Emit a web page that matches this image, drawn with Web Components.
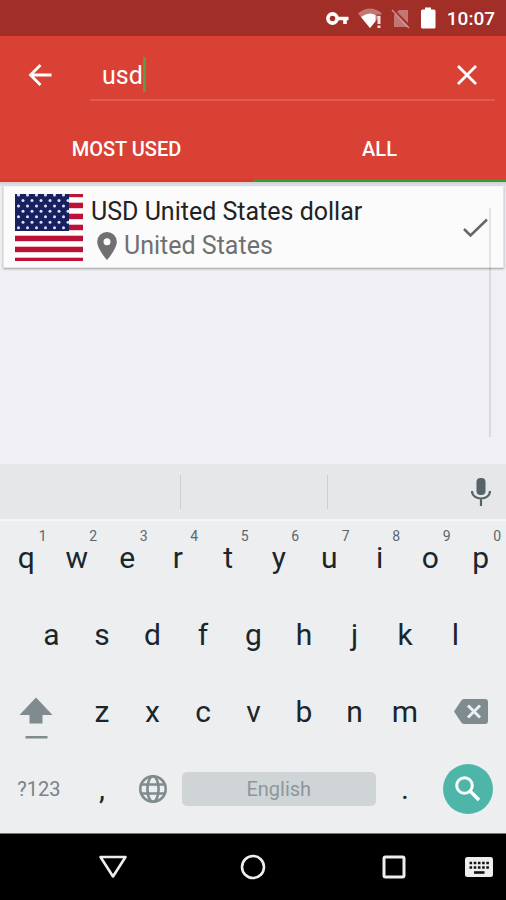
<!DOCTYPE html>
<html lang="en">
<head>
<meta charset="utf-8">
<meta name="viewport" content="width=device-width, initial-scale=1">
<title>Currency search</title>
<style>
html, body { height: 100%; margin: 0; }
body { font-family: Roboto, "Noto Sans", sans-serif; background: #efeff4; }
</style>
</head>
<body>
<currency-app></currency-app>
<script>
const reset = `
  *, *::before { box-sizing: border-box; }
  button, input { font: inherit; color: inherit; border: 0; padding: 0; margin: 0; background: none; outline: 0; }
  svg { display: block; flex: none; }
`;
function define(name, css, html) {
  const t = document.createElement('template');
  customElements.define(name, class extends HTMLElement {
    constructor() {
      super();
      t.innerHTML = `<style>${reset}${css}</style>${typeof html === 'function' ? html(this) : html}`;
      this.attachShadow({ mode: 'open' }).append(t.content.cloneNode(true));
    }
  });
}

define('status-bar', `
  :host { display: flex; align-items: center; justify-content: flex-end; height: 36px; padding: 2px 11px 0 12px; background: #a22e28; color: #fff; font-size: 19px; font-weight: 500; line-height: 24px; }
  .gap { margin-left: 8px; }
  time { margin-left: 8px; }
`, `
  <svg width="24" height="24" viewBox="0 0 24 24"><path fill="none" stroke="#fff" stroke-width="3.600" d="M12 11.500H23.500M20 12v5"/><circle cx="7.500" cy="11.500" r="4.600" fill="none" stroke="#fff" stroke-width="3.600"/></svg>
  <svg class="gap" width="26" height="24" viewBox="0 0 26 24"><path d="M1 6.500Q13-3.500 25 6.500L13 21z" fill="#fff" opacity=".35"/><path d="M4 10Q13 3 22 10L13 21z" fill="#fff"/><path d="M18.500 7.500H26V22h-7.500z" fill="#a22e28" opacity=".6"/><path d="M20.500 9h3v8h-3zM20.500 18.500h3v2.500h-3z" fill="#fff" opacity=".85"/></svg>
  <svg class="gap" width="20" height="24" viewBox="0 0 20 24"><path d="M8 3h9v17H3V8z" fill="#fff" opacity=".35"/><path d="M2 3l18 18" stroke="#a22e28" stroke-width="3"/><path d="M1 3l17 18" stroke="#fff" stroke-width="1.500" opacity=".45"/></svg>
  <svg class="gap" width="20" height="24" viewBox="0 0 20 24" fill="#fff"><path d="M6 0.500h6v2h3q1.500 0 1.500 1.500v16q0 1.500-1.500 1.500H3.500q-1.500 0-1.500-1.500v-16Q2 2.500 3.500 2.500H6z"/></svg>
  <time>10:07</time>
`);

define('search-bar', `
  :host { display: flex; align-items: stretch; height: 65px; padding-right: 11px; color: #fff; }
  .back { width: 90px; display: flex; align-items: center; padding: 12px 0 0 28px; }
  .field { flex: 1; min-width: 0; display: flex; align-items: center; padding: 14px 0 0 12px; border-bottom: 2px solid #df5a50; }
  input { field-sizing: content; font-size: 25px; line-height: 32px; padding-top: 2px; }
  .caret { width: 3px; height: 35px; background: #5a9a48; }
  .clear { margin-left: auto; padding-right: 18px; }
`, `
  <button class="back" aria-label="Back"><svg width="24" height="24" viewBox="0 0 24 24" fill="none" stroke="#fff" stroke-width="2.800"><path d="M23.500 12H3M12.500 2L2.500 12l10 10"/></svg></button>
  <div class="field">
    <input type="text" value="usd" aria-label="Search currency"><span class="caret"></span>
    <button class="clear" aria-label="Clear"><svg width="20" height="20" viewBox="0 0 20 20" stroke="#fff" stroke-width="2.800"><path d="M1 1l18 18M19 1L1 19"/></svg></button>
  </div>
`);

define('tab-item', `
  :host { display: flex; flex: 1; }
  button { flex: 1; padding: 14px 0 18px; font-size: 20px; font-weight: 500; line-height: 24px; color: #fff; border-bottom: 3px solid #d93a2c; }
  :host([selected]) button { border-color: #2f9e36; }
`, `<button role="tab"><slot></slot></button>`);

define('tab-strip', `
  :host { display: flex; padding-top: 22px; }
`, `<slot></slot>`);

const stars = (() => {
  let s = '';
  for (let r = 0; r < 7; r++) for (let c = 0; c < 6; c++)
    s += `<circle r="1.500" cx="${(r % 2 ? 8 : 3.500) + c * 9}" cy="${1 + r * 5.450}"/>`;
  return s;
})();
const stripes = [0, 1, 2, 3, 4, 5, 6].map(i => `<rect y="${-2.300 + i * 11}" width="68" height="5.500" fill="#bd1137"/>`).join('');

define('currency-row', `
  :host { display: block; }
  button { display: flex; align-items: center; width: 100%; padding: 5px 14px 4px 11px; text-align: left; background: #fbfbfb; border: 1px solid #e4e4e6; border-top-color: #f4f4f4; box-shadow: 0 1px 2px #0005; }
  .text { flex: 1; min-width: 0; padding: 3px 0 0 8px; font-size: 25px; line-height: 34px; color: #222; }
  .place { display: flex; align-items: center; gap: 7px; padding-left: 6px; color: #707070; }
  .name, .place { height: 34px; }
`, `
  <button aria-pressed="true">
    <svg width="68" height="67" viewBox="0 0 68 67"><rect width="68" height="67" fill="#fff"/>${stripes}<rect width="54" height="37" fill="#18205f"/><g fill="#dfe3f2">${stars}</g></svg>
    <span class="text"><div class="name"><slot></slot></div>
      <div class="place"><svg width="20" height="28" viewBox="0 0 20 28" fill="#707070"><path fill-rule="evenodd" d="M10 0a9.800 9.800 0 0 0-9.800 9.800C.2 17 10 28 10 28s9.800-11 9.800-18.200A9.800 9.800 0 0 0 10 0zm0 13.300a3.500 3.500 0 1 1 0-7 3.500 3.500 0 0 1 0 7z"/></svg><slot name="place"></slot></div></span>
    <svg width="26" height="20" viewBox="0 0 26 20" fill="none" stroke="#666" stroke-width="2.500"><path d="M1 11l6.500 6.500L24 1.500"/></svg>
  </button>
`);

define('result-list', `
  :host { display: block; flex: 1; position: relative; padding: 4px 2px 0 3px; background: linear-gradient(#cfcfd2, #efeff4 6px); }
  .bar { position: absolute; right: 15px; top: 26px; bottom: 27px; width: 2px; background: #00000018; }
`, `<slot></slot><div class="bar"></div>`);

define('suggestion-strip', `
  :host { display: flex; align-items: center; height: 55px; background: #e5e7e9; }
  .s { flex: 146 0 0; height: 34px; border-right: 1px solid #cbcfd1; }
  .first { flex-grow: 181; }
  .last { flex: 179 0 0; display: flex; justify-content: flex-end; }
  button { margin-right: 15px; }
`, `
  <div class="s first"></div><div class="s"></div>
  <div class="last"><button aria-label="Voice input"><svg width="20" height="28" viewBox="0 0 20 28"><rect x="5.500" y="0" width="9" height="17" rx="4" fill="#56636a"/><path d="M1 13c0 10 18 10 18 0M10 20v8" fill="none" stroke="#56636a" stroke-width="2.200"/></svg></button></div>
`);

define('key-cap', `
  :host { display: flex; position: relative; grid-column: span 2; }
  :host([wide]) { grid-column: span 3; }
  :host([space]) { grid-column: span 8; padding: 0 4px; align-items: center; }
  button { flex: 1; min-width: 0; display: flex; align-items: center; justify-content: center; font-size: 30px; line-height: 36px; color: #1b262c; }
  :host([small]) button { font-size: 20px; color: #78838a; }
  :host([space]) button { height: 34px; border-radius: 5px; background: #cfd4d6; font-size: 20px; line-height: 24px; color: #8d979b; }
  .hint { position: absolute; top: 9px; right: 5px; font-size: 14px; line-height: 16px; color: #5c676c; }
`, el => `<button><slot></slot></button>${el.getAttribute('hint') ? `<span class="hint">${el.getAttribute('hint')}</span>` : ''}`);

define('soft-keyboard', `
  :host { display: grid; grid-template-columns: repeat(20, 1fr); grid-auto-rows: 77px; padding: 0 0 6px 1px; background: #eceef0; box-shadow: inset 0 2px #f3f7f7; }
  .a { grid-column: 2 / span 2; }
  .shift { padding-right: 6px; }
  .delete { padding-left: 6px; }
`, () => {
  const k = (c, a = '') => `<key-cap ${a}>${c}</key-cap>`;
  return [...'qwertyuiop'].map((c, i) => k(c, `hint="${(i + 1) % 10}"`)).join('')
    + [...'asdfghjkl'].map((c, i) => k(c, i ? '' : 'class="a"')).join('') + '<span></span>'
    + k('<svg role="img" aria-label="Shift" width="34" height="54" viewBox="0 0 34 54" fill="#7f8b8e"><path d="M17 12.500l16.500 17.500H23.500V38.500H10.500V30H.5zM6.500 51h22v2.500h-22z"/></svg>', 'wide class="shift"')
    + [...'zxcvbnm'].map(c => k(c)).join('')
    + k('<svg role="img" aria-label="Backspace" width="34" height="28" viewBox="0 0 34 28"><path d="M10 1h21q3 0 3 3v19q0 3-3 3H10q-2 0-3-2L0 13.500 7 3q1-2 3-2z" fill="#7f8b8e"/><path d="M14 7.500l12 12M26 7.500L14 19.500" stroke="#eceff1" stroke-width="3"/></svg>', 'wide class="delete"')
    + k('?123', 'wide small') + k(',')
    + k('<svg role="img" aria-label="Change language" width="28" height="28" viewBox="0 0 28 28" fill="none" stroke="#7f8b8e" stroke-width="2.600"><circle cx="14" cy="14" r="12.700"/><ellipse cx="14" cy="14" rx="5.600" ry="12.700"/><path d="M2 9.500h24M2 18.500h24"/></svg>')
    + k('English', 'space') + k('.')
    + k('<svg role="img" aria-label="Search" width="50" height="50" viewBox="0 0 50 50"><circle cx="25" cy="25" r="25" fill="#4db6a8"/><circle cx="21.500" cy="21.500" r="7.800" fill="none" stroke="#fff" stroke-width="3"/><path d="M27 27l9 9" stroke="#fff" stroke-width="3.600"/></svg>', 'wide');
});

define('nav-bar', `
  :host { display: grid; grid-template-columns: repeat(3, 1fr); height: 67px; padding: 0 42px 0 43px; position: relative; background: #000; border-top: 1px solid #777; }
  button { display: flex; align-items: center; justify-content: center; }
  .switch { position: absolute; right: 13px; top: 0; bottom: 0; }
`, `
  <button aria-label="Back"><svg width="30" height="26" viewBox="0 0 30 26" fill="none" stroke="#eee" stroke-width="2.600"><path d="M2.500 3h25L15 22.500z" stroke-linejoin="round"/></svg></button>
  <button aria-label="Home"><svg width="26" height="26" viewBox="0 0 26 26" fill="none" stroke="#eee" stroke-width="2.600"><circle cx="13" cy="13" r="11"/></svg></button>
  <button aria-label="Recent apps"><svg width="24" height="24" viewBox="0 0 24 24" fill="none" stroke="#eee" stroke-width="3"><rect x="2" y="2" width="20" height="20" rx="1.500"/></svg></button>
  <button class="switch" aria-label="Switch keyboard"><svg width="28" height="20" viewBox="0 0 28 20"><rect width="28" height="20" rx="2.500" fill="#eee"/><path d="M4.500 6h20M4.500 10.500h20" stroke="#111" stroke-width="2.600" stroke-dasharray="2.600 1.600"/><path d="M9 15.500h10.500" stroke="#111" stroke-width="2.600"/></svg></button>
`);

define('currency-app', `
  :host { display: flex; flex-direction: column; min-height: 100vh; }
  header { background: #d94135; }
`, `
  <status-bar></status-bar>
  <header><search-bar></search-bar>
    <tab-strip role="tablist"><tab-item>MOST USED</tab-item><tab-item selected>ALL</tab-item></tab-strip></header>
  <result-list><currency-row>USD United States dollar<span slot="place">United States</span></currency-row></result-list>
  <suggestion-strip></suggestion-strip>
  <soft-keyboard></soft-keyboard>
  <nav-bar></nav-bar>
`);
</script>
</body>
</html>
